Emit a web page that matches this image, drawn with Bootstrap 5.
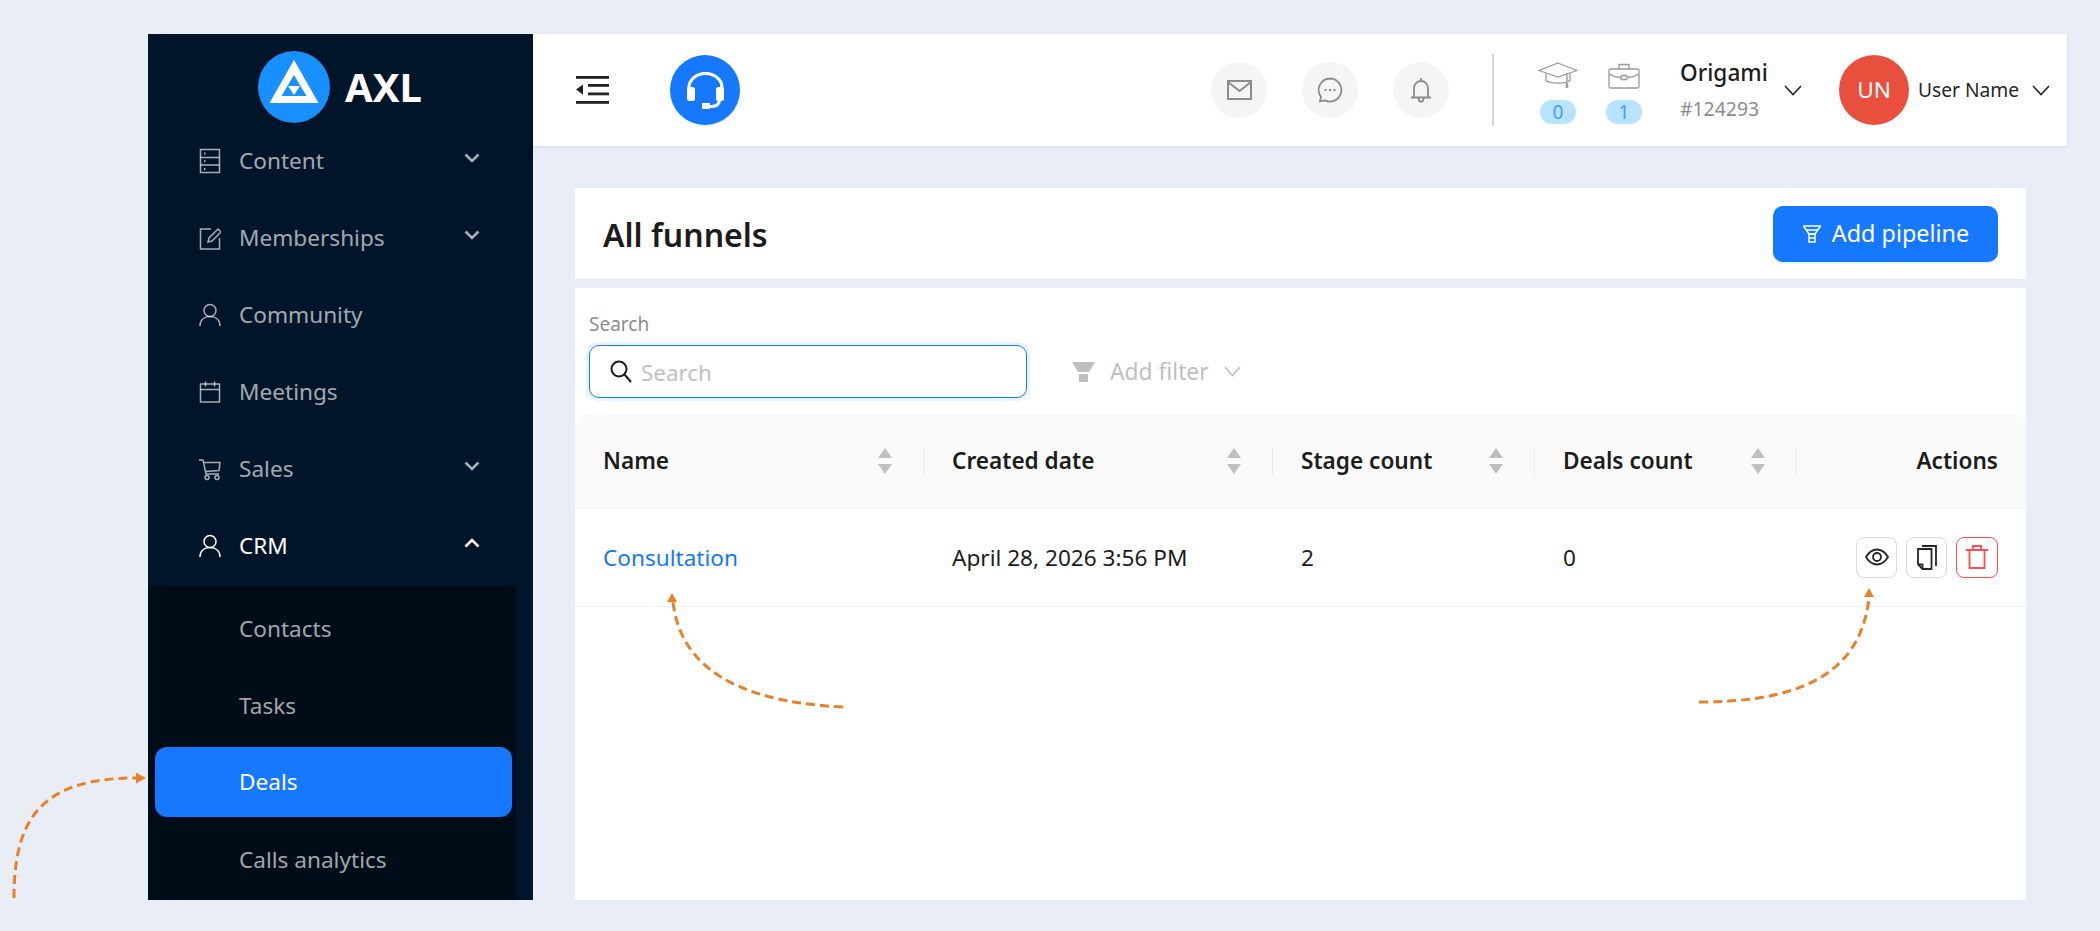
<!DOCTYPE html>
<html lang="en">
<head>
  <meta charset="UTF-8">
  <meta name="viewport" content="width=device-width, initial-scale=1.0">
  <title>All funnels</title>
  <link href="https://cdn.jsdelivr.net/npm/bootstrap@5.3.0/dist/css/bootstrap.min.css" rel="stylesheet">
  <style>
    body {
      background: #e9eef6;
      font-family: "Noto Sans", "Liberation Sans", sans-serif;
      height: 931px;
      overflow: hidden;
      padding: 34px 33px 0 148px;
      position: relative;
    }
    .app-shell { height: 866px; }

    .side-menu {
      width: 385px;
      flex: none;
      background: #001529;
      overflow: hidden;
    }
    .brand-row { height: 88px; padding: 17px 0 0 110px; gap: 15px; }
    .brand-name { color: #fff; font-size: 40px; font-weight: 700; line-height: 72px; }
    .menu-link {
      height: 77px;
      padding: 0 53px 0 51px;
      color: rgba(255,255,255,.65);
      font-size: 22.6px;
    }
    .menu-link:hover { color: rgba(255,255,255,.65); }
    .menu-link.is-open { color: #fff; }
    .menu-ico { width: 22px; height: 26px; margin-right: 18px; flex: none; fill: none; stroke: currentColor; stroke-width: 1.5; }
    .menu-caret { width: 16px; height: 10px; margin-left: auto; margin-top: -6px; fill: none; stroke: currentColor; stroke-width: 2.6; }
    .sub-menu { background: #000c17; width: 368px; margin-top: 2px; padding-top: 4px; height: 314px; }
    .sub-link { height: 77px; padding-left: 91px; color: rgba(255,255,255,.65); font-size: 22.6px; }
    .sub-link.is-active {
      background: #1677ff;
      color: #fff;
      width: 357px;
      height: 70px;
      margin: 3px 0 4px 7px;
      padding-left: 84px;
      border-radius: 12px;
    }

    .top-bar {
      height: 112px;
      flex: none;
      background: #fff;
      padding: 0 17px 0 43px;
      box-shadow: 0 1px 4px rgba(0,21,41,.08);
    }
    .support-btn {
      width: 70px; height: 70px; margin-left: 61px;
      background: #1677ff;
      box-shadow: 0 2px 0 rgba(5,145,255,.1);
    }
    .round-btn { width: 56px; height: 56px; background: #f5f5f5; }
    .bar-gap { gap: 35px; }
    .bar-rule { width: 2px; height: 72px; background: #d4d4d4; margin: 0 46px 0 43px; }
    .stat-group { gap: 30px; margin-top: 6px; }
    .stat-item { width: 36px; }
    .stat-count {
      width: 36px; height: 24px; margin-top: 10px;
      border-radius: 12px;
      background: #b8e3ff;
      color: #3ba0f5;
      font-size: 19px;
      line-height: 24px;
      text-align: center;
    }
    .org-block { width: 104px; margin-left: 38px; flex: none; }
    .org-name { font-size: 22.6px; font-weight: 500; color: #1c1c1c; line-height: 28px; white-space: nowrap; }
    .org-id { font-size: 19.4px; color: #8c8c8c; line-height: 24px; margin-top: 10px; }
    .org-caret { margin-right: 37px; flex: none; }
    .user-badge {
      width: 70px; height: 70px;
      flex: none;
      background: #e94f3d;
      color: #fff;
      font-size: 22.6px;
    }
    .user-label { width: 103px; flex: none; font-size: 19.2px; color: #262626; margin: 0 11px 0 9px; white-space: nowrap; }

    .page-body { padding: 42px 41px 0 42px; min-height: 0; }
    .title-card { height: 91px; flex: none; background: #fff; padding: 0 28px; }
    .page-title { font-size: 32px; font-weight: 600; color: #1c1c1c; margin: 3px 0 0; }
    .add-btn {
      width: 225px; height: 56px;
      background: #1677ff;
      color: #fff;
      font-size: 23.4px;
      border-radius: 10px;
      border: 0;
      gap: 10px;
      box-shadow: 0 2px 0 rgba(5,145,255,.1);
    }
    .list-card { background: #fff; margin-top: 9px; }
    .filter-bar { padding: 24px 14px 16px; }
    .search-label { font-size: 19px; color: #8c8c8c; line-height: 24px; margin-bottom: 9px; }
    .search-box {
      width: 438px; height: 53px;
      border: 1.5px solid #1677ff;
      border-radius: 10px;
      box-shadow: 0 0 0 3px rgba(5,145,255,.1);
      padding: 0 20px;
      gap: 9px;
    }
    .search-box input {
      border: 0; outline: 0; flex: 1; min-width: 0; padding: 2px 0 0;
      font-size: 22.4px; color: #262626;
    }
    .search-box input::placeholder { color: #bfbfbf; }
    .filter-btn { margin-left: 45px; margin-top: 33px; gap: 15px; color: #bfbfbf; font-size: 22.8px; height: 53px; }
    .filter-text { padding-top: 2px; }

    .funnel-table { width: 1451px; table-layout: fixed; margin: 0; font-size: 22.6px; color: #1c1c1c; }
    .funnel-table th {
      height: 94px;
      background: #fafafa;
      font-weight: 600;
      padding: 0 28px;
      vertical-align: middle;
      position: relative;
      border-bottom: 1px solid #f0f0f0;
      white-space: nowrap;
    }
    .funnel-table th:first-child { border-top-left-radius: 12px; }
    .funnel-table th:last-child { border-top-right-radius: 12px; }
    .funnel-table th:not(:last-child)::before {
      content: "";
      position: absolute;
      right: 0; top: 33px;
      width: 1px; height: 28px;
      background: #ececec;
    }
    .funnel-table td { height: 98px; padding: 2px 28px 0; vertical-align: middle; border-bottom: 1px solid #f0f0f0; white-space: nowrap; }
    .funnel-table a { color: #1677ff; text-decoration: none; }
    .sort-mark { width: 14px; height: 26px; margin-right: 4px; fill: #bfbfbf; flex: none; }
    .act-btn {
      width: 41px; height: 41px;
      background: #fff;
      border: 1px solid #d9d9d9;
      border-radius: 8px;
      padding: 0;
      box-shadow: 0 2px 0 rgba(0,0,0,.02);
    }
    .act-btn.is-danger { border-color: #ff4d4f; width: 42px; }
    .act-group { gap: 9px; margin-top: -2px; }

    .guide-arrows { position: absolute; left: 0; top: 0; pointer-events: none; }
  </style>
</head>
<body>
<div class="app-shell d-flex">
  <aside class="side-menu">
    <div class="brand-row d-flex align-items-start">
      <svg width="72" height="72" viewBox="0 0 72 72">
        <circle cx="36" cy="36" r="36" fill="#1890ff"/>
        <path d="M36 9 60.500 52H11.500Z" fill="#fff"/>
        <path d="M36 24 48.500 45H23.500Z" fill="#1890ff"/>
        <path d="M30 35H42L36 44Z" fill="#fff"/>
      </svg>
      <span class="brand-name">AXL</span>
    </div>
    <nav class="nav flex-column">
      <a class="nav-link menu-link d-flex align-items-center" href="#">
        <svg class="menu-ico" viewBox="0 0 22 26"><rect x="1.500" y="1.500" width="19" height="23"/><path d="M1.500 9.500h19M1.500 17h19"/><path d="M5 5.500h1.500M5 13.200h1.500M5 21h1.500" stroke-width="1.800"/></svg>
        Content
        <svg class="menu-caret" viewBox="0 0 16 10"><path d="M1.500 1.500 8 8l6.500-6.500"/></svg>
      </a>
      <a class="nav-link menu-link d-flex align-items-center" href="#">
        <svg class="menu-ico" viewBox="0 0 22 26"><path d="M12 4H1.500v20h19V13"/><path d="M9 17l1-4 9-9 3 3-9 9z"/></svg>
        Memberships
        <svg class="menu-caret" viewBox="0 0 16 10"><path d="M1.500 1.500 8 8l6.500-6.500"/></svg>
      </a>
      <a class="nav-link menu-link d-flex align-items-center" href="#">
        <svg class="menu-ico" viewBox="0 0 22 26"><circle cx="11" cy="8.500" r="6"/><path d="M1 24c0-6 4-9.500 10-9.500S21 18 21 24"/></svg>
        Community
      </a>
      <a class="nav-link menu-link d-flex align-items-center" href="#">
        <svg class="menu-ico" viewBox="0 0 22 26"><rect x="1.500" y="5" width="19" height="18"/><path d="M1.500 10.500h19M6.500 2.500v5M15.500 2.500v5"/></svg>
        Meetings
      </a>
      <a class="nav-link menu-link d-flex align-items-center" href="#">
        <svg class="menu-ico" viewBox="0 0 22 26"><path d="M0 4h4l3 14h13M4.500 6.500H21l-1 8-13.500 1"/><circle cx="8" cy="21.500" r="2"/><circle cx="18" cy="21.500" r="2"/></svg>
        Sales
        <svg class="menu-caret" viewBox="0 0 16 10"><path d="M1.500 1.500 8 8l6.500-6.500"/></svg>
      </a>
      <a class="nav-link menu-link is-open d-flex align-items-center" href="#">
        <svg class="menu-ico" viewBox="0 0 22 26"><circle cx="11" cy="8.500" r="6"/><path d="M1 24c0-6 4-9.500 10-9.500S21 18 21 24"/></svg>
        CRM
        <svg class="menu-caret" viewBox="0 0 16 10"><path d="M1.500 8.500 8 2l6.500 6.500"/></svg>
      </a>
    </nav>
    <div class="sub-menu">
      <a class="nav-link sub-link d-flex align-items-center" href="#">Contacts</a>
      <a class="nav-link sub-link d-flex align-items-center" href="#">Tasks</a>
      <a class="nav-link sub-link is-active d-flex align-items-center" href="#">Deals</a>
      <a class="nav-link sub-link d-flex align-items-center" href="#">Calls analytics</a>
    </div>
  </aside>

  <div class="flex-grow-1 d-flex flex-column">
    <header class="top-bar d-flex align-items-center">
      <svg width="33" height="28" viewBox="0 0 33 28" fill="#222">
        <rect y="0" width="33" height="2.800"/>
        <rect x="12" y="8" width="21" height="2.800"/>
        <rect x="12" y="16.500" width="21" height="2.800"/>
        <rect y="25" width="33" height="2.800"/>
        <path d="M0 13.600 7 8.500v10.200z"/>
      </svg>
      <div class="support-btn rounded-circle d-flex align-items-center justify-content-center">
        <svg width="37" height="37" viewBox="0 0 37 37" fill="none" stroke="#fff" stroke-width="3.200">
          <path d="M2 17v-1.500a16.500 14 0 0 1 33 0V17"/>
          <rect x="0" y="15" width="8" height="14" rx="2.500" fill="#fff" stroke="none"/>
          <rect x="29" y="15" width="8" height="14" rx="2.500" fill="#fff" stroke="none"/>
          <path d="M32.500 27c0 5-2.500 7.500-8 7.500h-4"/>
          <rect x="15" y="31" width="8" height="6" fill="#fff" stroke="none"/>
        </svg>
      </div>

      <div class="ms-auto d-flex align-items-center bar-gap">
        <div class="round-btn rounded-circle d-flex align-items-center justify-content-center">
          <svg width="25" height="20" viewBox="0 0 25 20" fill="none" stroke="#8c8c8c" stroke-width="2"><rect x="1" y="1" width="23" height="18"/><path d="M1 2l11.500 9L24 2"/></svg>
        </div>
        <div class="round-btn rounded-circle d-flex align-items-center justify-content-center">
          <svg width="26" height="26" viewBox="0 0 26 26" fill="none" stroke="#8c8c8c" stroke-width="1.800"><path d="M13 1.500a11.500 11.500 0 1 1-5 21.900l-5 1 1-4.500A11.500 11.500 0 0 1 13 1.500z"/><path d="M7.500 13h2M12 13h2M16.500 13h2" stroke-width="2"/></svg>
        </div>
        <div class="round-btn rounded-circle d-flex align-items-center justify-content-center">
          <svg width="20" height="26" viewBox="0 0 20 26" fill="none" stroke="#8c8c8c" stroke-width="1.800"><path d="M3 20V11a7 7 0 0 1 14 0v9M0 20.500h20M10 1v3M7.500 21c0 5 5 5 5 0"/></svg>
        </div>
      </div>
      <div class="bar-rule"></div>
      <div class="d-flex stat-group">
        <div class="stat-item d-flex flex-column align-items-center">
          <svg width="40" height="28" viewBox="0 0 40 28" fill="none" stroke="#999" stroke-width="1.300"><path d="M20 1 39 8.500 20 15 1 8.500z"/><path d="M8 11.500v7c4 3.500 20 3.500 24 0v-7M29 11v9.500"/><path d="M29 21v5" stroke-width="2.500"/></svg>
          <div class="stat-count">0</div>
        </div>
        <div class="stat-item d-flex flex-column align-items-center">
          <svg width="32" height="28" viewBox="0 0 32 28" fill="none" stroke="#999" stroke-width="1.300"><rect x="1" y="7" width="30" height="19" rx="1.500"/><path d="M11 7V2.500h10V7M1 12c5 3 9 3.500 12 3.500M31 12c-5 3-9 3.500-12 3.500"/><rect x="13" y="13.500" width="6" height="4" rx="1"/></svg>
          <div class="stat-count">1</div>
        </div>
      </div>
      <div class="org-block">
        <div class="org-name">Origami</div>
        <div class="org-id">#124293</div>
      </div>
      <svg class="org-caret" width="18" height="11" viewBox="0 0 18 11" fill="none" stroke="#262626" stroke-width="1.600"><path d="M1 1l8 8.500L17 1"/></svg>
      <div class="user-badge rounded-circle d-flex align-items-center justify-content-center">UN</div>
      <span class="user-label">User Name</span>
      <svg width="18" height="11" viewBox="0 0 18 11" fill="none" stroke="#262626" stroke-width="1.600"><path d="M1 1l8 8.500L17 1"/></svg>
    </header>

    <main class="page-body flex-grow-1 d-flex flex-column">
      <div class="title-card d-flex align-items-center justify-content-between">
        <h1 class="page-title">All funnels</h1>
        <button class="add-btn d-flex align-items-center justify-content-center" type="button">
          <svg width="20" height="20" viewBox="0 0 20 20" fill="none" stroke="#fff" stroke-width="1.500"><path d="M1 2h18M1.500 2l5.500 8h6l5.500-8M4 6h12"/><rect x="7" y="10" width="6" height="8"/><path d="M7 14h6"/></svg>
          Add pipeline
        </button>
      </div>

      <div class="list-card flex-grow-1">
        <div class="filter-bar d-flex align-items-start">
          <div>
            <div class="search-label">Search</div>
            <div class="search-box d-flex align-items-center">
              <svg width="22" height="23" viewBox="0 0 22 23" fill="none" stroke="#1c1c1c" stroke-width="2"><circle cx="9" cy="9" r="7.500"/><path d="M14.500 14.500 21 22"/></svg>
              <input type="text" placeholder="Search">
            </div>
          </div>
          <div class="filter-btn d-flex align-items-center">
            <svg width="23" height="20" viewBox="0 0 23 20" fill="#bfbfbf"><path d="M0 0h23l-6 10H6z"/><rect x="7" y="12" width="9" height="8"/></svg>
            <span class="filter-text">Add filter</span>
            <svg width="17" height="11" viewBox="0 0 17 11" fill="none" stroke="#bfbfbf" stroke-width="1.500"><path d="M1 1l7.500 8.500L16 1"/></svg>
          </div>
        </div>

        <table class="funnel-table">
          <colgroup><col style="width:349px"><col style="width:349px"><col style="width:262px"><col style="width:262px"><col></colgroup>
          <thead>
            <tr>
              <th><div class="d-flex align-items-center justify-content-between">Name<svg class="sort-mark" viewBox="0 0 14 26"><path d="M7 0l7 10H0zM0 16h14L7 26z"/></svg></div></th>
              <th><div class="d-flex align-items-center justify-content-between">Created date<svg class="sort-mark" viewBox="0 0 14 26"><path d="M7 0l7 10H0zM0 16h14L7 26z"/></svg></div></th>
              <th><div class="d-flex align-items-center justify-content-between">Stage count<svg class="sort-mark" viewBox="0 0 14 26"><path d="M7 0l7 10H0zM0 16h14L7 26z"/></svg></div></th>
              <th><div class="d-flex align-items-center justify-content-between">Deals count<svg class="sort-mark" viewBox="0 0 14 26"><path d="M7 0l7 10H0zM0 16h14L7 26z"/></svg></div></th>
              <th class="text-end">Actions</th>
            </tr>
          </thead>
          <tbody>
            <tr>
              <td><a href="#">Consultation</a></td>
              <td>April 28, 2026 3:56 PM</td>
              <td>2</td>
              <td>0</td>
              <td>
                <div class="act-group d-flex justify-content-end">
                  <button class="act-btn d-flex align-items-center justify-content-center" type="button">
                    <svg width="24" height="18" viewBox="0 0 24 18" fill="none" stroke="#262626" stroke-width="1.800"><path d="M1 9c3-5 7-7.500 11-7.500S20 4 23 9c-3 5-7 7.500-11 7.500S4 14 1 9z"/><circle cx="12" cy="9" r="4"/></svg>
                  </button>
                  <button class="act-btn d-flex align-items-center justify-content-center" type="button">
                    <svg width="20" height="25" viewBox="0 0 20 25" fill="none" stroke="#262626" stroke-width="1.800"><path d="M5 1h14v20"/><path d="M1 4h13.500v20H5.500L1 19.500z"/><path d="M1 19.500h4.500V24"/></svg>
                  </button>
                  <button class="act-btn is-danger d-flex align-items-center justify-content-center" type="button">
                    <svg width="22" height="24" viewBox="0 0 22 24" fill="none" stroke="#ff4d4f" stroke-width="1.800"><path d="M0 5h22M7 5V1h8v4M3.500 5v18h15V5"/></svg>
                  </button>
                </div>
              </td>
            </tr>
          </tbody>
        </table>
      </div>
    </main>
  </div>
</div>

<svg class="guide-arrows" width="2100" height="931" viewBox="0 0 2100 931" fill="none">
  <g stroke="#e8812a" stroke-width="3" stroke-dasharray="9 5">
    <path d="M14 898C14 820 40 778 136 778"/>
    <path d="M843 707C760 703 682 680 673 602"/>
    <path d="M1699 702C1790 702 1860 680 1869 598"/>
  </g>
  <g fill="#e8812a">
    <path d="M146 778 136 772.500V783.500Z"/>
    <path d="M672 593 667 602H677Z"/>
    <path d="M1869 588 1864 597H1874Z"/>
  </g>
</svg>

<script src="https://cdn.jsdelivr.net/npm/bootstrap@5.3.0/dist/js/bootstrap.bundle.min.js"></script>
</body>
</html>
